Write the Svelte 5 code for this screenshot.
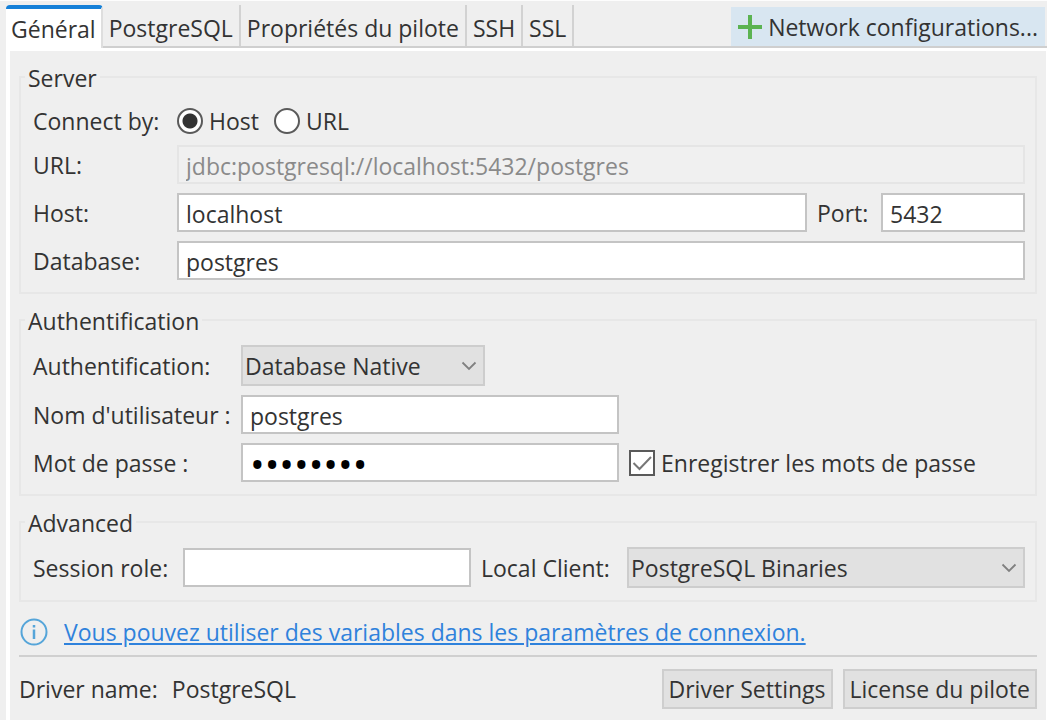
<script>
  const tabs = ['Général', 'PostgreSQL', 'Propriétés du pilote', 'SSH', 'SSL'];
  let activeTab = $state('Général');
  let connectBy = $state('host');
  let host = $state('localhost');
  let port = $state('5432');
  let database = $state('postgres');
  let user = $state('postgres');
  let password = $state('postgres');
  let savePassword = $state(true);
  let role = $state('');
  const url = $derived(`jdbc:postgresql://${host}:${port}/${database}`);
</script>

{#snippet chevron()}
  <svg class="chevron" viewBox="0 0 16 10" aria-hidden="true">
    <path d="M1.500 1.500 8 8l6.500-6.500" fill="none" stroke="#808080" stroke-width="1.800" />
  </svg>
{/snippet}

<div class="dialog">
  <header>
    <div class="tabs" role="tablist">
      {#each tabs as tab}
        <button
          class="tab"
          class:active={tab === activeTab}
          role="tab"
          aria-selected={tab === activeTab}
          onclick={() => (activeTab = tab)}>{tab}</button>
      {/each}
    </div>
    <button class="network">
      <svg viewBox="0 0 24 24" aria-hidden="true">
        <path d="M12 0v24M0 12h24" stroke="#5bb352" stroke-width="4" />
      </svg>
      Network configurations...
    </button>
  </header>

  <main>
    <fieldset class="server">
      <legend>Server</legend>
      <div class="row connect">
        <span>Connect by:</span>
        <label><input type="radio" name="by" value="host" bind:group={connectBy} />Host</label>
        <label><input type="radio" name="by" value="url" bind:group={connectBy} />URL</label>
      </div>
      <div class="row">
        <label for="url">URL:</label>
        <input id="url" class="text grow" value={url} disabled />
      </div>
      <div class="row">
        <label for="host">Host:</label>
        <input id="host" class="text grow" bind:value={host} />
        <label class="inline port-label" for="port">Port:</label>
        <input id="port" class="text port" bind:value={port} />
      </div>
      <div class="row">
        <label for="database">Database:</label>
        <input id="database" class="text grow" bind:value={database} />
      </div>
    </fieldset>

    <fieldset class="auth">
      <legend>Authentification</legend>
      <div class="row">
        <label for="auth">Authentification:</label>
        <div class="select method">
          <select id="auth"><option>Database Native</option></select>
          {@render chevron()}
        </div>
      </div>
      <div class="row">
        <label for="user">Nom d'utilisateur :</label>
        <input id="user" class="text credential" bind:value={user} />
      </div>
      <div class="row">
        <label for="password">Mot de passe :</label>
        <input id="password" type="password" class="text credential" bind:value={password} />
        <label class="inline save">
          <span class="check">
            <input type="checkbox" bind:checked={savePassword} />
            {#if savePassword}
              <svg viewBox="0 0 26 26" aria-hidden="true">
                <path d="M4.500 13 10.500 19 22 7" fill="none" stroke="#777" stroke-width="2" />
              </svg>
            {/if}
          </span>
          Enregistrer les mots de passe
        </label>
      </div>
    </fieldset>

    <fieldset class="advanced">
      <legend>Advanced</legend>
      <div class="row">
        <label for="role">Session role:</label>
        <input id="role" class="text role" bind:value={role} />
        <label class="inline client-label" for="client">Local Client:</label>
        <div class="select grow">
          <select id="client"><option>PostgreSQL Binaries</option></select>
          {@render chevron()}
        </div>
      </div>
    </fieldset>

    <div class="info">
      <svg viewBox="0 0 28 28" aria-hidden="true">
        <circle cx="14" cy="14" r="12.500" fill="none" stroke="#55a5d9" stroke-width="2" />
        <path d="M14 11.500V21M14 7v2.500" stroke="#55a5d9" stroke-width="2.500" />
      </svg>
      <a href="#variables">Vous pouvez utiliser des variables dans les paramètres de connexion.</a>
    </div>

    <footer>
      <span>Driver name:</span>
      <span class="driver">PostgreSQL</span>
      <button class="push">Driver Settings</button>
      <button class="push">License du pilote</button>
    </footer>
  </main>
</div>

<style>
  :global(body) {
    background: #fff;
  }

  .dialog,
  .dialog * {
    box-sizing: border-box;
  }

  .dialog {
    padding-left: 6px;
    border-top: 1px solid #fdfdfd;
    background: #efefef;
    color: #333;
    font: 23px/30px "Open Sans", "Noto Sans", sans-serif;
    white-space: nowrap;
  }

  button,
  input,
  select {
    margin: 0;
    font: inherit;
    color: inherit;
  }

  header {
    display: flex;
    justify-content: space-between;
    height: 47px;
    padding-top: 4px;
    border-bottom: 2px solid #cfcfcf;
  }

  .tabs {
    display: flex;
  }

  .tab {
    padding: 4px 6px 0;
    border: 0;
    border-right: 2px solid #d2d2d2;
    background: none;
  }

  .tab.active {
    margin-bottom: -2px;
    padding: 0 5px;
    border-top: 4px solid #1580d8;
    border-right-color: #dedede;
    border-radius: 4px 4px 0 0;
    background: #fff;
  }

  .network {
    display: flex;
    align-items: center;
    gap: 6px;
    margin: 2px 2px 0 0;
    padding: 0 7px;
    border: 0;
    background: #d8e6f1;
  }

  .network svg {
    width: 24px;
    height: 24px;
  }

  main {
    padding: 12px 9px 11px;
    border: solid #fff;
    border-width: 3px 1px 1px 4px;
  }

  fieldset {
    min-width: 0;
    margin: 0 0 12px;
    padding: 11px 10px 12px 12px;
    border: 2px solid #e7e7e7;
  }

  legend {
    height: 28px;
    margin-left: -8px;
    padding: 1px 3px 0;
    line-height: 28px;
  }

  .row {
    display: flex;
    align-items: center;
    margin-top: 9px;
  }

  legend + .row {
    margin-top: 0;
  }

  .row > :first-child {
    flex: none;
    width: 144px;
  }

  .auth .row > :first-child {
    width: 208px;
  }

  .advanced .row > :first-child {
    width: 150px;
  }

  .server {
    padding-top: 15px;
  }

  .connect label {
    display: flex;
    align-items: center;
    gap: 6px;
    margin-right: 15px;
  }

  .text {
    min-width: 0;
    height: 39px;
    padding: 2px 7px 0;
    border: 2px solid #c4c4c4;
    border-radius: 0;
    background: #fff;
  }

  .text:disabled {
    border-color: #e5e5e5;
    background: #f0f0f0;
    color: #8a8a8a;
  }

  .text[type='password'] {
    color: #000;
    font-size: 39px;
  }

  .grow {
    flex: 1;
  }

  .inline {
    flex: none;
    margin-left: 10px;
  }

  .port-label {
    width: 64px;
  }

  .port {
    width: 144px;
  }

  .credential {
    width: 378px;
  }

  .role {
    width: 288px;
  }

  .client-label {
    width: 146px;
  }

  .save {
    display: flex;
    align-items: center;
    gap: 6px;
  }

  input[type='radio'] {
    appearance: none;
    width: 26px;
    height: 26px;
    border: 2px solid #5a5a5a;
    border-radius: 50%;
    background: #fff;
  }

  input[type='radio']:checked {
    background: radial-gradient(circle, #333 7px, #fff 8px);
  }

  .check {
    position: relative;
    width: 26px;
    height: 26px;
  }

  input[type='checkbox'] {
    display: block;
    appearance: none;
    width: 26px;
    height: 26px;
    border: 2px solid #5a5a5a;
    background: #fff;
  }

  .check svg {
    position: absolute;
    inset: 0;
    pointer-events: none;
  }

  .select {
    position: relative;
  }

  .method {
    width: 244px;
  }

  select {
    display: block;
    appearance: none;
    width: 100%;
    height: 41px;
    padding: 0 32px 0 2px;
    border: 2px solid #cdcdcd;
    border-radius: 0;
    background: #e1e1e1;
  }

  .chevron {
    position: absolute;
    top: 16px;
    right: 8px;
    width: 16px;
    height: 10px;
    pointer-events: none;
  }

  .info {
    display: flex;
    align-items: center;
    gap: 16px;
    margin-top: 15px;
    padding: 0 1px 8px;
    border-bottom: 2px solid #d0d0d0;
  }

  .info svg {
    flex: none;
    width: 28px;
    height: 28px;
  }

  .info a {
    color: #2f82dc;
  }

  footer {
    display: flex;
    align-items: center;
    gap: 10px;
    margin-top: 12px;
  }

  .driver {
    flex: 1;
    margin-left: 4px;
  }

  .push {
    height: 40px;
    padding: 0 5px;
    border: 2px solid #cecece;
    background: #e1e1e1;
  }
</style>
